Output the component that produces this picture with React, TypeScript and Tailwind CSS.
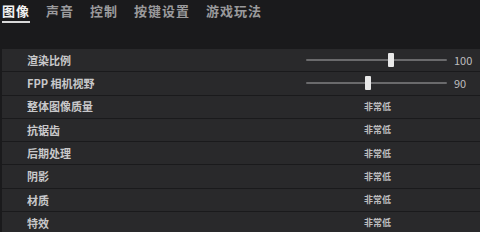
import React from "react";

const tabs = ["图像", "声音", "控制", "按键设置", "游戏玩法"];

type Row = { label: string; slider?: { pos: number; value: string }; value?: string };

const rows: Row[] = [
  { label: "渲染比例", slider: { pos: 82, value: "100" } },
  { label: "FPP 相机视野", slider: { pos: 59, value: "90" } },
  { label: "整体图像质量", value: "非常低" },
  { label: "抗锯齿", value: "非常低" },
  { label: "后期处理", value: "非常低" },
  { label: "阴影", value: "非常低" },
  { label: "材质", value: "非常低" },
  { label: "特效", value: "非常低" },
];

export default function App() {
  return (
    <div
      className="w-[480px] h-[232px] overflow-hidden bg-[#1a1a1c] flex flex-col"
      style={{ fontFamily: '"Noto Sans CJK SC", "Noto Sans", sans-serif' }}
    >
      <div className="h-[49px] shrink-0 flex items-start pl-[2px] gap-[16px] pt-[1px]">
        {tabs.map((t, i) => (
          <div key={t} className="flex flex-col items-stretch">
            <span
              className={
                "text-[13px] leading-[20px] font-bold tracking-[1px] " +
                (i === 0 ? "text-[#f2f2f2]" : "text-[#9a9a9c]")
              }
            >
              {t}
            </span>
            <div className={"h-[2px] " + (i === 0 ? "bg-[#d8d8d8]" : "bg-transparent")} />
          </div>
        ))}
      </div>
      <div className="flex flex-col gap-px pl-[2px]">
        {rows.map((r) => (
          <div key={r.label} className="h-[22.3px] bg-[#29292b] flex items-center relative shrink-0">
            <span className="ml-[25px] text-[11px] font-bold text-[#c8c8ca]">{r.label}</span>
            {r.slider && (
              <div className="absolute left-[304px] top-0 h-full flex items-center">
                <div className="relative w-[141px] h-[2px] bg-[#6a6a6c] rounded-full">
                  <div
                    className="absolute top-[-6px] w-[6px] h-[14px] bg-[#e8e8e8] rounded-[1px]"
                    style={{ left: `${r.slider.pos}px` }}
                  />
                </div>
                <span className="ml-[7px] text-[11px] text-[#bdbdbf]">{r.slider.value}</span>
              </div>
            )}
            {r.value && (
              <span className="absolute left-[362px] text-[9px] font-bold text-[#bdbdbf]">{r.value}</span>
            )}
          </div>
        ))}
      </div>
    </div>
  );
}
